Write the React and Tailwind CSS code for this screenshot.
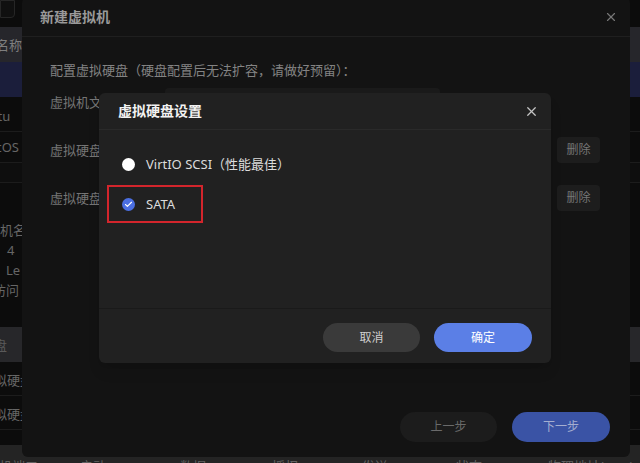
import { X, Check } from 'lucide-react';

const font = { fontFamily: '"Noto Sans", "Noto Sans CJK SC", sans-serif' };

function BgRow({ className = '', children }) {
  return <div className={`flex items-center w-full shrink-0 ${className}`}>{children}</div>;
}

export default function App() {
  return (
    <div
      className="relative w-[640px] h-[463px] overflow-hidden bg-[#0c0c0c] text-[13px] leading-5"
      style={font}
    >
      {/* Page behind the dialogs */}
      <div className="flex flex-col w-full text-[#666]">
        <BgRow className="h-[27px]">
          <div className="w-[15px] h-[18px] -mt-[9px] border border-[#262626] bg-[#101010] rounded-br-sm" />
        </BgRow>
        <BgRow className="h-[35px] bg-[#26262b]">
          <span className="-ml-[4px] text-[#7e7e7e]">名称</span>
        </BgRow>
        <BgRow className="h-[35px] bg-[#1b1e3b]" />
        <BgRow className="h-[35px] border-b border-[#1c1c1c]">
          <span className="-ml-[36px] pt-[4px]">Ubuntu</span>
        </BgRow>
        <BgRow className="h-[31px] border-b border-[#1c1c1c]">
          <span className="-ml-[24px]">macOS</span>
        </BgRow>
        <BgRow className="h-[20px] bg-[#0e0e0e] border-b border-[#1c1c1c]" />
        <BgRow className="h-[20px]" />
        <div className="flex flex-col pt-[17px] gap-0">
          <span className="h-[20px] -ml-[26px]">虚拟机名:</span>
          <span className="h-[20px] pl-[7px]">4</span>
          <span className="h-[20px] -ml-[10px] pl-[16px]">Le</span>
          <span className="h-[20px] -ml-[7px]">访问</span>
        </div>
        <div className="h-[27px]" />
        <BgRow className="h-[35px] bg-[#27272a]">
          <span className="-ml-[6px] text-[#5a5a5a]">盘</span>
        </BgRow>
        <BgRow className="h-[34px] border-b border-[#1c1c1c]">
          <span className="-ml-[6px] pt-[2px]">拟硬盘</span>
        </BgRow>
        <BgRow className="h-[34px] border-b border-[#1c1c1c]">
          <span className="-ml-[6px] pt-[2px]">拟硬盘</span>
        </BgRow>
        <BgRow className="h-[15px]" />
        <BgRow className="h-[40px] bg-[#242424] text-[#626262]">
          <div className="flex w-full pt-[2px]">
            <span className="w-[80px] -ml-[14px]">主机端口</span>
            <span className="w-[100px] ml-[14px]">启动</span>
            <span className="w-[92px]">数据</span>
            <span className="w-[90px]">授权</span>
            <span className="w-[94px]">发送</span>
            <span className="w-[92px]">状态</span>
            <span>物理地址(mac)</span>
          </div>
        </BgRow>
      </div>

      {/* 新建虚拟机 dialog */}
      <div className="absolute left-[22px] top-[-3px] w-[608px] h-[460px] bg-[#131313] rounded-md flex flex-col">
        <div className="flex items-center justify-between h-[40px] pl-[18px] pr-[12px] border-b border-[#1f1f1f] shrink-0">
          <span className="text-[14px] font-bold text-[#999]">新建虚拟机</span>
          <X size={14} className="text-[#777]" strokeWidth={2} />
        </div>
        <div className="flex flex-col pl-[28px] pt-[23px]">
          <p className="text-[#838383]">配置虚拟硬盘（硬盘配置后无法扩容，请做好预留）：</p>
          <div className="flex items-center h-[28px] mt-[8px]">
            <span className="w-[115px] text-[#757575]">虚拟机文件</span>
            <div className="w-[275px] h-[28px] rounded bg-[#1a1a1a]" />
          </div>
          <div className="flex items-center h-[26px] mt-[21px]">
            <span className="w-[115px] text-[#757575]">虚拟硬盘</span>
            <div className="w-[380px] h-[26px] rounded bg-[#1a1a1a]" />
            <button className="ml-[12px] w-[43px] h-[26px] rounded bg-[#1d1d1d] text-[12px] text-[#767676]">删除</button>
          </div>
          <div className="flex items-center h-[26px] mt-[22px]">
            <span className="w-[115px] text-[#757575]">虚拟硬盘</span>
            <div className="w-[380px] h-[26px] rounded bg-[#1a1a1a]" />
            <button className="ml-[12px] w-[43px] h-[26px] rounded bg-[#1d1d1d] text-[12px] text-[#767676]">删除</button>
          </div>
        </div>
        <div className="mt-auto flex justify-end gap-[15px] pr-[20px] pb-[15px]">
          <button className="w-[97px] h-[30px] rounded-full bg-[#1c1c1c] text-[12px] text-[#6a6a6a]">上一步</button>
          <button className="w-[98px] h-[30px] rounded-full bg-[#3a53a5] text-[12px] text-[#a4aed0]">下一步</button>
        </div>
      </div>

      {/* 虚拟硬盘设置 modal */}
      <div className="absolute left-[99px] top-[93px] w-[452px] h-[270px] bg-[#212121] rounded-md flex flex-col shadow-lg">
        <div className="flex items-center justify-between h-[37px] pl-[19px] pr-[12px] border-b border-[#2a2a2a] shrink-0">
          <span className="text-[14px] font-bold text-[#f2f2f2]">虚拟硬盘设置</span>
          <X size={15} className="text-[#c4c4c4]" strokeWidth={2} />
        </div>
        <div className="flex-1 flex flex-col">
          <label className="flex items-center gap-[11px] h-[20px] mt-[24px] pl-[23px] text-[#dcdcdc]">
            <span className="w-[13px] h-[13px] rounded-full bg-white" />
            <span>VirtIO SCSI（性能最佳）</span>
          </label>
          <div className="ml-[8px] mt-[11px] w-[96px] h-[38px] border-2 border-[#d3252c] flex items-center pl-[13px]">
            <label className="flex items-center gap-[11px] text-[#dcdcdc]">
              <span className="w-[13px] h-[13px] rounded-full bg-[#4b6fe2] flex items-center justify-center">
                <Check size={9} strokeWidth={3} className="text-white" />
              </span>
              <span>SATA</span>
            </label>
          </div>
        </div>
        <div className="flex justify-end gap-[14px] h-[55px] pt-[14px] pr-[19px] border-t border-[#1a1a1a] shrink-0">
          <button className="w-[97px] h-[29px] rounded-full bg-[#3a3a3a] text-[12px] text-[#cfcfcf]">取消</button>
          <button className="w-[98px] h-[29px] rounded-full bg-[#5b7fe6] text-[12px] text-white">确定</button>
        </div>
      </div>
    </div>
  );
}
